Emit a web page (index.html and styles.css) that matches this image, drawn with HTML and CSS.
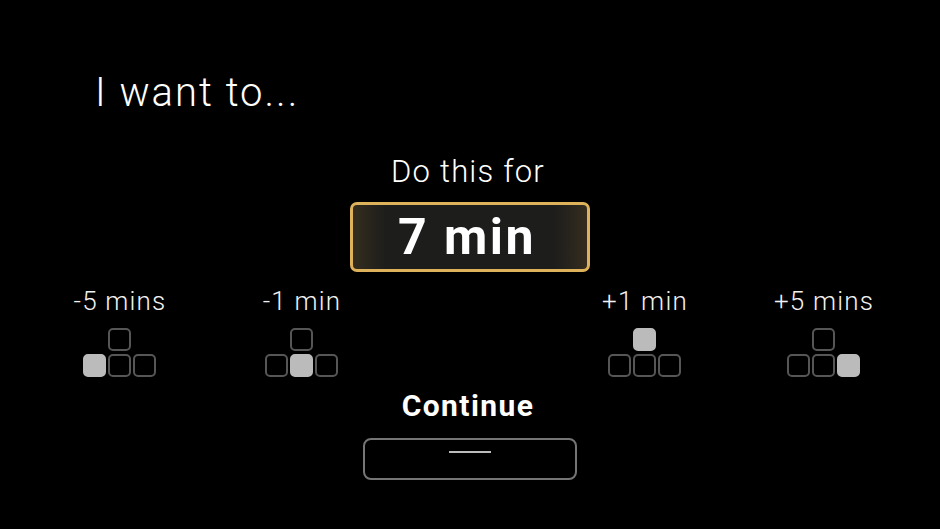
FILE: index.html
```html
<!DOCTYPE html>
<html lang="en">
<head>
<meta charset="utf-8">
<title>I want to...</title>
<link rel="stylesheet" href="styles.css">
</head>
<body>
<main class="screen">
  <h1 class="title">I want to...</h1>
  <section class="duration">
    <p class="duration-label">Do this for</p>
    <div class="duration-value">7 min</div>
  </section>
  <section class="controls">
    <div class="control">
      <span class="control-label">-5 mins</span>
      <div class="pad"><i class="key top"></i><i class="key on"></i><i class="key"></i><i class="key"></i></div>
    </div>
    <div class="control">
      <span class="control-label">-1 min</span>
      <div class="pad"><i class="key top"></i><i class="key"></i><i class="key on"></i><i class="key"></i></div>
    </div>
    <div class="control">
      <span class="control-label">+1 min</span>
      <div class="pad"><i class="key top on"></i><i class="key"></i><i class="key"></i><i class="key"></i></div>
    </div>
    <div class="control">
      <span class="control-label">+5 mins</span>
      <div class="pad"><i class="key top"></i><i class="key"></i><i class="key"></i><i class="key on"></i></div>
    </div>
  </section>
  <section class="action">
    <span class="action-label">Continue</span>
    <button class="action-button" type="button"><span class="dash"></span></button>
  </section>
</main>
</body>
</html>
```
FILE: styles.css
```css
* { box-sizing: border-box; }
html, body { margin: 0; height: 100%; background: #000; }
.screen {
  width: 940px;
  height: 529px;
  overflow: hidden;
  background: #000;
  color: #fff;
  font-family: "Roboto", "Liberation Sans", sans-serif;
  font-weight: 300;
  padding-top: 69px;
}
.title {
  margin: 0 0 0 95px;
  font-size: 40px;
  line-height: 48px;
  font-weight: 300;
  letter-spacing: 2px;
}
.duration {
  margin-top: 37px;
  display: flex;
  flex-direction: column;
  align-items: center;
}
.duration-label {
  margin: 0;
  padding-right: 4px;
  font-size: 31px;
  line-height: 36px;
  letter-spacing: 1.2px;
  font-weight: 300;
}
.duration-value {
  margin-top: 12px;
  width: 240px;
  height: 70px;
  border: 3px solid #deb25a;
  border-radius: 7px;
  background: linear-gradient(90deg, #352d1e 0%, #1d1d1c 14%, #1d1d1c 86%, #352d1e 100%);
  display: flex;
  align-items: center;
  justify-content: center;
  padding-right: 6px;
  font-size: 50px;
  font-weight: 700;
  letter-spacing: 2.5px;
  line-height: 1;
}
.controls {
  margin: 14px 0 0 60px;
  display: grid;
  grid-template-columns: 182px 343px 179px 120px;
}
.control {
  width: 120px;
  display: flex;
  flex-direction: column;
  align-items: center;
}
.control-label {
  font-size: 26px;
  line-height: 30px;
  letter-spacing: 1.2px;
  color: #f2f2f2;
  white-space: nowrap;
}
.pad {
  margin-top: 12px;
  margin-right: 2px;
  display: grid;
  grid-template-columns: repeat(3, 23px);
  grid-template-rows: 23px 23px;
  gap: 3px 2px;
}
.key {
  display: block;
  grid-row: 2;
  border: 2px solid #565656;
  border-radius: 5px;
}
.key.top { grid-column: 2; grid-row: 1; }
.key.on { background: #bbb; border-color: #bbb; }
.action {
  margin-top: 11px;
  display: flex;
  flex-direction: column;
  align-items: center;
}
.action-label {
  padding-right: 4px;
  font-size: 30px;
  line-height: 36px;
  font-weight: 700;
  letter-spacing: 1.4px;
}
.action-button {
  margin-top: 14px;
  width: 214px;
  height: 42px;
  padding: 11px 0 0;
  background: #000;
  border: 2px solid #757575;
  border-radius: 8px;
  display: flex;
  justify-content: center;
  align-items: flex-start;
}
.dash {
  display: block;
  width: 42px;
  height: 2px;
  background: #bcbcbc;
}
```
